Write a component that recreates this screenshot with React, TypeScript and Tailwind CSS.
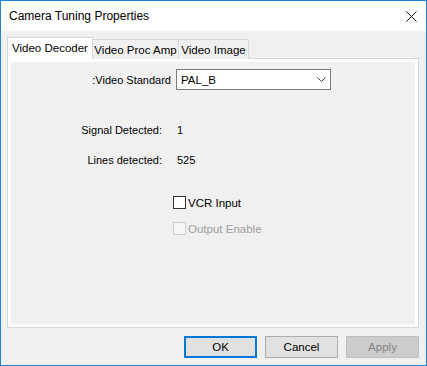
import { useState } from "react";

export default function App() {
  const [standard] = useState("PAL_B");
  const [vcr, setVcr] = useState(false);

  return (
    <div className="w-[427px] h-[366px] border border-[#1883d7] bg-[#f0f0f0] flex flex-col font-['Liberation_Sans',Arial,sans-serif] text-[11px] text-black leading-[16px] whitespace-nowrap">
      {/* Title bar */}
      <div className="h-[30px] bg-white flex items-center justify-between pl-[8px] pr-[9px]">
        <span className="text-[12px]">Camera Tuning Properties</span>
        <svg width="11" height="11" viewBox="0 0 11 11">
          <path d="M0.5 0.5L10.5 10.5M10.5 0.5L0.5 10.5" stroke="#111" strokeWidth="1" />
        </svg>
      </div>

      <div className="flex-1 flex flex-col pl-[6px] pr-[7px] pt-[6px]">
        {/* Tabs */}
        <div className="flex items-end h-[22px] relative z-10 text-[11.5px]">
          <div className="h-[22px] w-[86px] bg-white border border-b-0 border-[#d9d9d9] flex items-center justify-center pb-[2px]">
            Video Decoder
          </div>
          <div className="h-[20px] w-[86px] bg-[#f0f0f0] border border-l-0 border-b-0 border-[#d9d9d9] flex items-center justify-center">
            Video Proc Amp
          </div>
          <div className="h-[20px] w-[70px] bg-[#f0f0f0] border border-l-0 border-b-0 border-[#d9d9d9] flex items-center justify-center">
            Video Image
          </div>
        </div>

        {/* Panel */}
        <div className="-mt-[1px] h-[270px] bg-white border border-[#d9d9d9] p-[3px]">
          <div className="h-full bg-[#f0f0f0] flex flex-col pt-[7px]">
            <div className="flex items-center">
              <span className="w-[160px] text-right">:Video Standard</span>
              <div className="ml-[5px] w-[155px] h-[21px] bg-white border border-[#7a7a7a] flex items-center justify-between pl-[4px] pr-[4px] text-[11.5px]">
                <span>{standard}</span>
                <svg width="9" height="5" viewBox="0 0 9 5">
                  <path d="M0.5 0.5L4.5 4.5L8.5 0.5" fill="none" stroke="#444" strokeWidth="1" />
                </svg>
              </div>
            </div>

            <div className="flex mt-[32px]">
              <span className="w-[151px] text-right">Signal Detected:</span>
              <span className="ml-[15px]">1</span>
            </div>
            <div className="flex mt-[14px]">
              <span className="w-[151px] text-right">Lines detected:</span>
              <span className="ml-[15px]">525</span>
            </div>

            <label className="flex items-center mt-[28px] ml-[162px] h-[13px]" onClick={() => setVcr(!vcr)}>
              <span className="w-[13px] h-[13px] bg-white border border-[#333] flex items-center justify-center">
                {vcr && (
                  <svg width="9" height="9" viewBox="0 0 9 9">
                    <path d="M1 4.5L3.5 7L8 1.5" fill="none" stroke="#111" strokeWidth="1.5" />
                  </svg>
                )}
              </span>
              <span className="ml-[2px] text-[11.5px]">VCR Input</span>
            </label>
            <div className="flex items-center mt-[13px] ml-[162px] h-[13px] text-[#a0a0a0] text-[11.5px]">
              <span className="w-[13px] h-[13px] bg-[#f7f7f7] border border-[#cccccc]" />
              <span className="ml-[2px]">Output Enable</span>
            </div>
          </div>
        </div>

        {/* Buttons */}
        <div className="flex justify-end gap-[8px] mt-[8px] text-[11.5px]">
          <button className="w-[73px] h-[22px] bg-[#e1e1e1] border-2 border-[#0078d7]">OK</button>
          <button className="w-[73px] h-[22px] bg-[#e1e1e1] border border-[#adadad]">Cancel</button>
          <button className="w-[73px] h-[22px] bg-[#cccccc] border border-[#bfbfbf] text-[#838383]" disabled>
            Apply
          </button>
        </div>
      </div>
    </div>
  );
}
